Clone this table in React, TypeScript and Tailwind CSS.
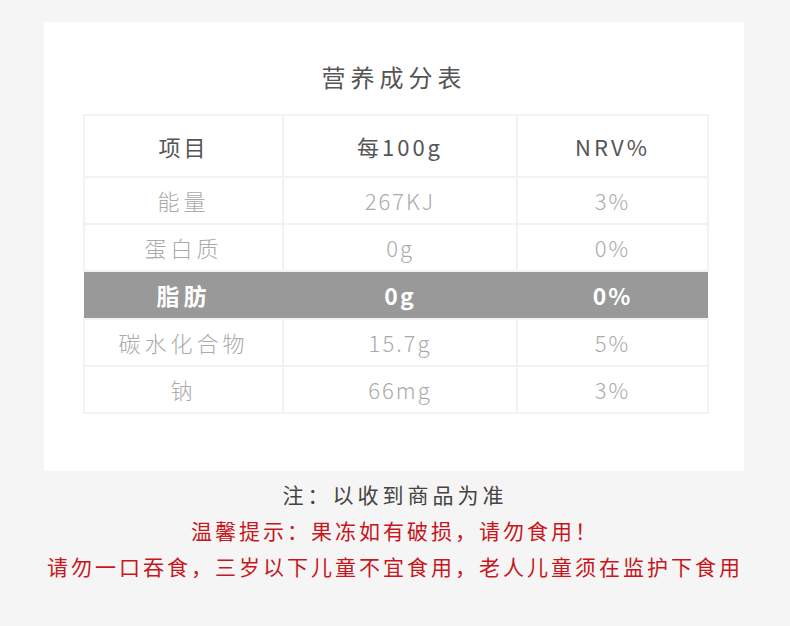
import React from 'react';

const ROWS = [
  { name: '能量', per: '267KJ', nrv: '3%' },
  { name: '蛋白质', per: '0g', nrv: '0%' },
  { name: '脂肪', per: '0g', nrv: '0%', hl: true },
  { name: '碳水化合物', per: '15.7g', nrv: '5%' },
  { name: '钠', per: '66mg', nrv: '3%' },
];

const font = { fontFamily: '"Noto Sans CJK SC", "Noto Sans", sans-serif' };

export default function App() {
  return (
    <div className="w-[790px] h-[626px] bg-[#f5f5f5] pt-[22px]" style={font}>
      <div className="ml-[44px] w-[700px] h-[449px] bg-white px-[39px] pt-[39px]">
        <h1 className="text-center text-[24px] leading-[32px] tracking-[5px] text-[#555] mb-[21px]">营养成分表</h1>
        <table className="border-collapse w-[624px] table-fixed">
          <colgroup>
            <col className="w-[199px]" />
            <col className="w-[234px]" />
            <col className="w-[191px]" />
          </colgroup>
          <thead>
            <tr className="h-[62px] text-[22px] text-[#555] tracking-[3px]">
              <th className="border-2 border-[#f2f2f2] font-normal">项目</th>
              <th className="border-2 border-[#f2f2f2] font-normal">每100g</th>
              <th className="border-2 border-[#f2f2f2] font-normal">NRV%</th>
            </tr>
          </thead>
          <tbody>
            {ROWS.map((r) =>
              r.hl ? (
                <tr key={r.name} className="h-[48px] bg-[#999999] text-white text-[23px] font-bold tracking-[4px]">
                  <td className="text-center">{r.name}</td>
                  <td className="text-center tracking-[2px]">{r.per}</td>
                  <td className="text-center tracking-[2px]">{r.nrv}</td>
                </tr>
              ) : (
                <tr key={r.name} className="h-[47px] text-[22px] text-[#aaa] font-light tracking-[4px]">
                  <td className="border-2 border-[#f2f2f2] text-center">{r.name}</td>
                  <td className="border-2 border-[#f2f2f2] text-center tracking-[2px]">{r.per}</td>
                  <td className="border-2 border-[#f2f2f2] text-center tracking-[2px]">{r.nrv}</td>
                </tr>
              )
            )}
          </tbody>
        </table>
      </div>
      <div className="mt-[5px] text-center text-[21px] leading-[36px]">
        <p className="text-[#444] tracking-[4px]">注：以收到商品为准</p>
        <p className="text-[#c8161d] tracking-[3px]">温馨提示：果冻如有破损，请勿食用！</p>
        <p className="text-[#c8161d] tracking-[3px]">请勿一口吞食，三岁以下儿童不宜食用，老人儿童须在监护下食用</p>
      </div>
    </div>
  );
}
